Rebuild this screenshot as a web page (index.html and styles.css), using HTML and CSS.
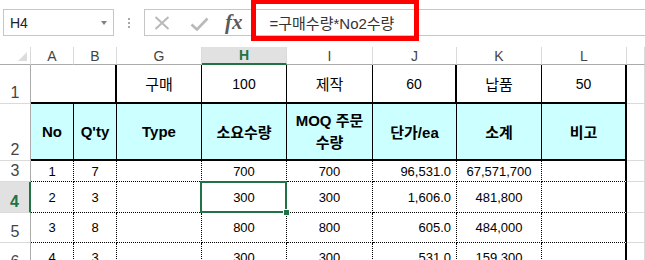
FILE: index.html
```html
<!DOCTYPE html>
<html lang="ko">
<head>
	<meta charset="UTF-8">
	<link rel="stylesheet" href="styles.css">
</head>
<body>
<div class="toolbar">
	<div class="namebox">H4<span class="arrow"></span></div>
	<div class="grip"><span></span></div>
	<div class="fxbar">
		<svg class="ico-x" width="16" height="14" viewBox="0 0 16 14"><path d="M1.5 1 L14.5 13 M14.5 1 L1.5 13" stroke="#b9b9b9" stroke-width="2" fill="none"/></svg>
		<svg class="ico-ok" width="19" height="14" viewBox="0 0 19 14"><path d="M1.5 7.5 L7 12.5 L17.5 1.5" stroke="#b9b9b9" stroke-width="2.6" fill="none"/></svg>
		<span class="fx">fx</span>
		<span class="formula">=구매수량*No2수량</span>
	</div>
	<div class="mark"></div>
</div>

<div class="sheet">
	<!-- column headers -->
	<div class="hd corner"><span class="tri"></span></div>
	<div class="hd">A</div>
	<div class="hd">B</div>
	<div class="hd">G</div>
	<div class="hd sel">H</div>
	<div class="hd">I</div>
	<div class="hd">J</div>
	<div class="hd">K</div>
	<div class="hd">L</div>
	<div class="hd"></div>

	<!-- row 1 -->
	<div class="rh">1</div>
	<div class="r1 ab"></div>
	<div class="r1 lbl">구매</div>
	<div class="r1">100</div>
	<div class="r1 lbl">제작</div>
	<div class="r1 thick">60</div>
	<div class="r1 lbl">납품</div>
	<div class="r1 edge">50</div>
	<div class="m"></div>

	<!-- row 2 -->
	<div class="rh">2</div>
	<div class="r2">No</div>
	<div class="r2">Q'ty</div>
	<div class="r2">Type</div>
	<div class="r2">소요수량</div>
	<div class="r2 two">MOQ 주문<br>수량</div>
	<div class="r2">단가/ea</div>
	<div class="r2">소계</div>
	<div class="r2 edge">비고</div>
	<div class="m"></div>

	<!-- row 3 -->
	<div class="rh">3</div>
	<div class="d">1</div>
	<div class="d">7</div>
	<div class="d"></div>
	<div class="d">700</div>
	<div class="d">700</div>
	<div class="d num">96,531.0</div>
	<div class="d">67,571,700</div>
	<div class="d edge"></div>
	<div class="m"></div>

	<!-- row 4 -->
	<div class="rh sel">4</div>
	<div class="d">2</div>
	<div class="d">3</div>
	<div class="d"></div>
	<div class="d cur">300<span class="handle"></span></div>
	<div class="d">300</div>
	<div class="d num">1,606.0</div>
	<div class="d">481,800</div>
	<div class="d edge"></div>
	<div class="m"></div>

	<!-- row 5 -->
	<div class="rh">5</div>
	<div class="d">3</div>
	<div class="d">8</div>
	<div class="d"></div>
	<div class="d">800</div>
	<div class="d">800</div>
	<div class="d num">605.0</div>
	<div class="d">484,000</div>
	<div class="d edge"></div>
	<div class="m"></div>

	<!-- row 6 -->
	<div class="rh">6</div>
	<div class="d">4</div>
	<div class="d">3</div>
	<div class="d"></div>
	<div class="d">300</div>
	<div class="d">300</div>
	<div class="d num">531.0</div>
	<div class="d">159,300</div>
	<div class="d edge"></div>
	<div class="m"></div>
</div>
</body>
</html>
```

FILE: styles.css
```css
html, body {
	margin: 0;
	background: #fff;
	font-family: "Liberation Sans", "Noto Sans CJK KR", sans-serif;
	overflow: hidden;
}

/* formula bar */
.toolbar {
	position: relative;
	display: flex;
	height: 47px;
	padding-top: 9px;
	box-sizing: border-box;
}
.namebox {
	margin-left: 3px;
	width: 111px;
	height: 27px;
	box-sizing: border-box;
	border: 1px solid #c6c6c6;
	display: flex;
	align-items: center;
	justify-content: space-between;
	padding: 0 6px 0 6px;
	font-size: 14px;
	color: #222;
}
.namebox .arrow {
	width: 0;
	height: 0;
	border-left: 3.5px solid transparent;
	border-right: 3.5px solid transparent;
	border-top: 4px solid #808080;
}
.grip {
	width: 30px;
	display: flex;
	justify-content: center;
	padding-top: 9px;
}
.grip span {
	width: 2px;
	height: 10px;
	background: repeating-linear-gradient(#a8a8a8 0 2px, transparent 2px 4px);
}
.fxbar {
	flex: 1;
	height: 27px;
	box-sizing: border-box;
	border: 1px solid #c6c6c6;
	border-right: none;
	display: flex;
	align-items: center;
}
.ico-x {
	margin-left: 9px;
}
.ico-ok {
	margin-left: 20px;
	margin-top: 3px;
}
.fx {
	margin-left: 16px;
	font-family: "Liberation Serif", serif;
	font-style: italic;
	font-weight: bold;
	font-size: 21px;
	color: #5a5a5a;
	line-height: 1;
}
.formula {
	margin-left: 27px;
	font-size: 15px;
	color: #333;
}
.mark {
	position: absolute;
	left: 251px;
	top: -1px;
	width: 168px;
	height: 42px;
	box-sizing: border-box;
	border: 5px solid #f00;
}

/* worksheet */
.sheet {
	display: grid;
	grid-template-columns: 31px 43px 43px 85px 85px 86px 84px 85px 85px 1fr;
	grid-template-rows: 18px 39px 57px 21px 31px 30px 30px;
}
.sheet > div {
	box-sizing: border-box;
	display: flex;
	align-items: center;
	justify-content: center;
	text-align: center;
	font-size: 13px;
	color: #000;
	white-space: nowrap;
}
.hd {
	border-right: 1px solid #dadada;
	border-bottom: 1px solid #ababab;
	font-size: 14px !important;
	color: #444 !important;
}
.hd.sel {
	background: #e1e1e1;
	color: #217346 !important;
	font-weight: bold;
	border-bottom: 2px solid #217346;
}
.corner {
	justify-content: flex-end !important;
	align-items: flex-end !important;
	padding: 0 3px 3px 0;
}
.tri {
	width: 0;
	height: 0;
	border-left: 9px solid transparent;
	border-bottom: 9px solid #dcdcdc;
}
.rh {
	border-right: 1px solid #ababab;
	border-bottom: 1px solid #dadada;
	align-items: flex-end !important;
	font-size: 16px !important;
	color: #444 !important;
	padding-bottom: 1px;
}
.rh.sel {
	background: #e1e1e1;
	color: #217346 !important;
	font-weight: bold;
	border-right: 2px solid #217346;
}
.m {
	border-right: 1px solid #dadada;
	border-bottom: 1px solid #dadada;
}

.r1 {
	border-right: 1px solid #000;
	border-bottom: 2px solid #000;
	font-size: 14px !important;
}
.r1.lbl {
	font-size: 15px !important;
}
.r1.ab {
	grid-column: span 2;
	border-right: 2px solid #000;
}
.r1.thick {
	border-right: 2px solid #000;
}
.r2 {
	background: #ccffff;
	border-right: 1px solid #000;
	border-bottom: 2px solid #000;
	font-weight: bold;
	font-size: 15px !important;
}
.r2.two {
	line-height: 22px;
	white-space: normal !important;
}
.d {
	border-right: 1px dotted #000;
	border-bottom: 1px dotted #000;
}
.d.num {
	justify-content: flex-end !important;
	padding-right: 5px;
}
.edge {
	border-right: 2px solid #000 !important;
}

/* active cell */
.cur {
	position: relative;
}
.cur::before {
	content: "";
	position: absolute;
	left: -2px;
	top: -1px;
	right: -1px;
	bottom: -1px;
	border: 2px solid #217346;
}
.handle {
	position: absolute;
	right: -4px;
	bottom: -4px;
	width: 5px;
	height: 5px;
	background: #217346;
	border: 1px solid #fff;
}
```
